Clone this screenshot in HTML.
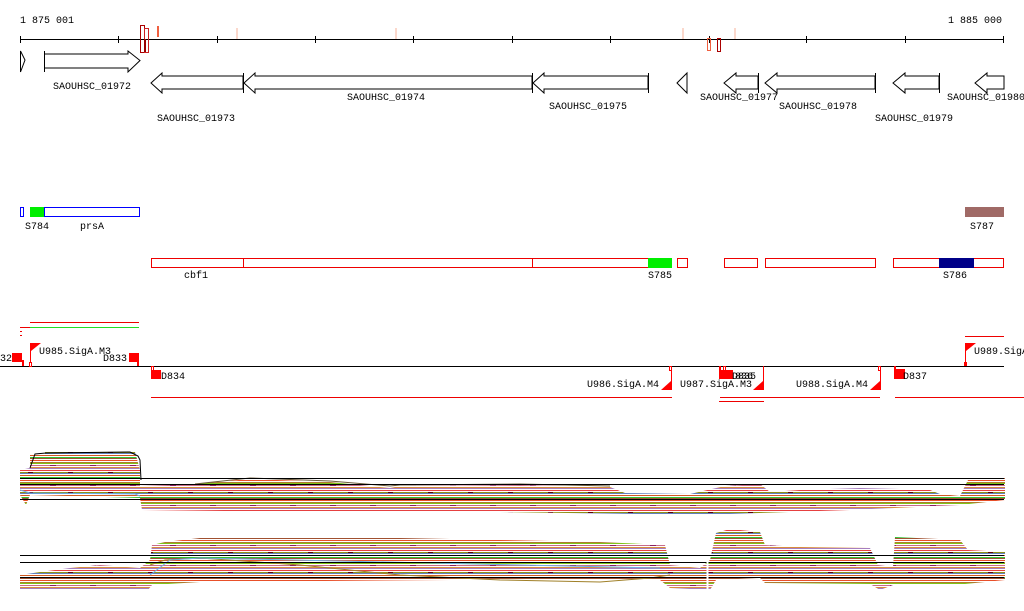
<!DOCTYPE html>
<html><head><meta charset="utf-8"><style>
html,body{margin:0;padding:0;background:#fff;width:1024px;height:611px;overflow:hidden}
svg{display:block}
text{font-family:"Liberation Mono","DejaVu Sans Mono",monospace;font-size:10px;fill:#000}
</style></head><body>
<svg width="1024" height="611" viewBox="0 0 1024 611" xmlns="http://www.w3.org/2000/svg">
<defs>
<pattern id="st" width="40" height="20" patternUnits="userSpaceOnUse">
<rect width="40" height="20" fill="#fff"/>
<rect y="0" width="40" height="1" fill="#e8502a"/>
<rect y="2" width="40" height="1" fill="#b07a30"/>
<rect y="3" width="40" height="1" fill="#7fc418"/>
<rect y="5" width="40" height="1" fill="#c86b8a"/>
<rect y="7" width="40" height="1" fill="#d98c3a"/>
<rect y="8" width="40" height="1" fill="#a67ec0"/>
<rect y="10" width="40" height="1" fill="#e64040"/>
<rect y="12" width="40" height="1" fill="#909018"/>
<rect y="13" width="40" height="1" fill="#6080c0"/>
<rect y="15" width="40" height="1" fill="#d05a20"/>
<rect y="17" width="40" height="1" fill="#30c030"/>
<rect y="18" width="40" height="1" fill="#a05030"/>
<rect x="10" y="5" width="6" height="1" fill="#8a2060"/>
<rect x="28" y="12" width="5" height="1" fill="#600"/>
</pattern>
</defs>

<!-- ruler -->
<text x="20" y="23">1 875 001</text>
<text x="1002" y="23" text-anchor="end">1 885 000</text>
<line x1="20" y1="39.5" x2="1004" y2="39.5" stroke="#000"/>
<g stroke="#000">
<line x1="20.5" y1="36" x2="20.5" y2="43"/><line x1="118.5" y1="36" x2="118.5" y2="43"/><line x1="217.5" y1="36" x2="217.5" y2="43"/><line x1="315.5" y1="36" x2="315.5" y2="43"/><line x1="413.5" y1="36" x2="413.5" y2="43"/><line x1="512.5" y1="36" x2="512.5" y2="43"/><line x1="610.5" y1="36" x2="610.5" y2="43"/><line x1="709.5" y1="36" x2="709.5" y2="43"/><line x1="806.5" y1="36" x2="806.5" y2="43"/><line x1="905.5" y1="36" x2="905.5" y2="43"/><line x1="1003.5" y1="36" x2="1003.5" y2="43"/>
</g>
<rect x="140.5" y="25.5" width="4" height="27" fill="none" stroke="#a00"/>
<rect x="144.5" y="28.5" width="4" height="24" fill="none" stroke="#c22"/>
<line x1="145" y1="39" x2="145" y2="52" stroke="#900" stroke-width="2"/>
<rect x="157" y="26" width="2" height="11" fill="#f06040"/>
<rect x="236" y="28" width="2" height="11" fill="#fbd8cc"/>
<rect x="395" y="28" width="2" height="11" fill="#fbd8cc"/>
<rect x="682" y="28" width="2" height="11" fill="#fbd8cc"/>
<rect x="734" y="28" width="2" height="11" fill="#fbd8cc"/>
<rect x="707.5" y="38.5" width="3" height="12" fill="none" stroke="#f06040"/>
<rect x="717.5" y="38.5" width="3" height="13" fill="none" stroke="#a00"/>

<!-- genes -->
<g fill="none" stroke="#000">
<polygon points="20.5,51 25,60 20.5,72"/>
<line x1="44.5" y1="51" x2="44.5" y2="72"/>
<polygon points="44.5,54 128,54 128,51 140,60.5 128,72 128,68 44.5,68"/>
<polygon points="151,83 162,73 162,76 243,76 243,89 162,89 162,93"/>
<line x1="243.5" y1="73" x2="243.5" y2="93"/>
<polygon points="244,83 255,73 255,76 532,76 532,89 255,89 255,93"/>
<line x1="532.5" y1="73" x2="532.5" y2="93"/>
<polygon points="533,83 544,73 544,76 648,76 648,89 544,89 544,93"/>
<line x1="648.5" y1="73" x2="648.5" y2="93"/>
<polygon points="677,83 687,73 687,93"/>
<polygon points="724,83 736,73 736,76 758,76 758,89 736,89 736,93"/>
<line x1="758.5" y1="73" x2="758.5" y2="93"/>
<polygon points="765,83 777,73 777,76 875,76 875,89 777,89 777,93"/>
<line x1="875.5" y1="73" x2="875.5" y2="93"/>
<polygon points="893,83 905,73 905,76 939,76 939,89 905,89 905,93"/>
<line x1="939.5" y1="73" x2="939.5" y2="93"/>
<polygon points="975,83 987,73 987,76 1004,76 1004,89 987,89 987,93"/>
</g>
<text x="53" y="89">SAOUHSC_01972</text>
<text x="157" y="121">SAOUHSC_01973</text>
<text x="347" y="100">SAOUHSC_01974</text>
<text x="549" y="109">SAOUHSC_01975</text>
<text x="700" y="100">SAOUHSC_01977</text>
<text x="779" y="109">SAOUHSC_01978</text>
<text x="875" y="121">SAOUHSC_01979</text>
<text x="947" y="100">SAOUHSC_01980</text>

<!-- blue row -->
<rect x="20.5" y="207.5" width="3" height="9" fill="none" stroke="#00f"/>
<rect x="30" y="207" width="14" height="10" fill="#0e0"/>
<rect x="44.5" y="207.5" width="95" height="9" fill="none" stroke="#00f"/>
<text x="25" y="229">S784</text>
<text x="80" y="229">prsA</text>
<rect x="965" y="207" width="39" height="10" fill="#a06a66"/>
<text x="970" y="229">S787</text>

<!-- red row -->
<g fill="none" stroke="#e00">
<rect x="151.5" y="258.5" width="92" height="9"/>
<rect x="243.5" y="258.5" width="289" height="9"/>
<rect x="532.5" y="258.5" width="139" height="9"/>
<rect x="677.5" y="258.5" width="10" height="9"/>
<rect x="724.5" y="258.5" width="33" height="9"/>
<rect x="765.5" y="258.5" width="110" height="9"/>
<rect x="893.5" y="258.5" width="110" height="9"/>
</g>
<rect x="648" y="258" width="24" height="10" fill="#0e0"/>
<rect x="939" y="258" width="35" height="10" fill="#008"/>
<text x="184" y="278">cbf1</text>
<text x="648" y="278">S785</text>
<text x="943" y="278">S786</text>

<!-- TSS section -->
<line x1="30" y1="322.5" x2="139" y2="322.5" stroke="#e00"/>
<line x1="30" y1="327.5" x2="139" y2="327.5" stroke="#2d2"/>
<line x1="20" y1="327.5" x2="30" y2="327.5" stroke="#e00"/>
<rect x="20" y="331" width="2" height="1" fill="#e00"/><rect x="20" y="335" width="2" height="1" fill="#e00"/>
<line x1="0" y1="366.5" x2="1004" y2="366.5" stroke="#000"/>
<text x="0" y="361">32</text>
<rect x="12" y="353" width="10" height="9" fill="#f00"/>
<rect x="22" y="360" width="2" height="6" fill="#f00"/>
<line x1="30.5" y1="343" x2="30.5" y2="366" stroke="#f00"/>
<polygon points="31,343 41,343 31,351" fill="#f00"/>
<rect x="29.5" y="362.5" width="2" height="4" fill="#fff" stroke="#f00"/>
<text x="39" y="354">U985.SigA.M3</text>
<text x="103" y="361">D833</text>
<rect x="129" y="353" width="10" height="9" fill="#f00"/>
<rect x="137" y="360" width="2" height="6" fill="#f00"/>
<rect x="151.5" y="366.5" width="2" height="4" fill="none" stroke="#f00"/>
<rect x="151" y="370" width="10" height="9" fill="#f00"/>
<text x="161" y="379">D834</text>
<line x1="151" y1="397.5" x2="672" y2="397.5" stroke="#e00"/>

<rect x="669.5" y="366.5" width="2" height="4" fill="none" stroke="#f00"/>
<line x1="671.5" y1="366" x2="671.5" y2="390" stroke="#f00"/>
<polygon points="671,381 671,390 661,390" fill="#f00"/>
<text x="587" y="387">U986.SigA.M4</text>
<text x="680" y="387">U987.SigA.M3</text>
<rect x="719" y="366" width="2" height="6" fill="#f00"/>
<rect x="723.5" y="366.5" width="2" height="4" fill="none" stroke="#f00"/>
<rect x="719" y="370" width="14" height="9" fill="#f00"/>
<text x="732" y="379">D835</text><text x="735" y="379">836</text>
<line x1="763.5" y1="366" x2="763.5" y2="390" stroke="#f00"/>
<polygon points="763,381 763,390 753,390" fill="#f00"/>
<line x1="720" y1="397.5" x2="880" y2="397.5" stroke="#e00"/>
<line x1="719" y1="401.5" x2="764" y2="401.5" stroke="#e00"/>
<text x="796" y="387">U988.SigA.M4</text>
<rect x="878.5" y="366.5" width="2" height="4" fill="none" stroke="#f00"/>
<line x1="880.5" y1="366" x2="880.5" y2="390" stroke="#f00"/>
<polygon points="880,381 880,390 870,390" fill="#f00"/>
<rect x="894" y="366" width="2" height="4" fill="#f00"/>
<rect x="894" y="369" width="11" height="10" fill="#f00"/>
<text x="903" y="379">D837</text>
<line x1="895" y1="397.5" x2="1024" y2="397.5" stroke="#e00"/>
<line x1="965" y1="336.5" x2="1004" y2="336.5" stroke="#e00"/>
<line x1="965.5" y1="343" x2="965.5" y2="366" stroke="#f00"/>
<polygon points="966,343 976,343 966,351" fill="#f00"/>
<rect x="964" y="362" width="3" height="4" fill="#f00"/>
<text x="974" y="354">U989.SigA</text>

<!-- plot 1 -->
<polygon fill="url(#st)" points="20,470 30,468 30,455 45,454 45,451 135,452 140,470 140,486 195,484 250,479 330,482 390,488 400,486 520,485 610,487 625,493 690,494 725,486 760,484 770,492 800,490 860,488 900,489 930,490 940,494 960,496 968,480 1005,478 1005,500 960,505 850,510 700,515 500,512 300,512 142,510 140,498 30,495 26,505 20,495"/>
<polyline fill="none" stroke="#000" points="30,468 35,454 46,453 130,452 138,456 140,460 141,480"/>
<polyline fill="none" stroke="#6ab0e8" points="20,490 30,493 135,494 140,496"/>
<polyline fill="none" stroke="#6b5a3a" points="195,484 250,478 330,481 390,486 400,485 520,484 610,486"/>
<line x1="20" y1="478.5" x2="1004" y2="478.5" stroke="#000"/>
<line x1="20" y1="484.5" x2="1004" y2="484.5" stroke="#000"/>
<line x1="20" y1="499.5" x2="1004" y2="499.5" stroke="#000"/>

<!-- plot 2 -->
<polygon fill="url(#st)" points="20,575 40,572 70,568 100,565 140,568 150,560 152,545 165,542 200,538 300,538 400,538 500,540 600,542 665,545 670,565 700,568 710,560 716,533 730,529 760,532 765,545 800,547 870,548 878,565 893,567 895,537 960,540 968,550 1005,552 1005,580 965,584 893,585 880,590 870,584 765,583 760,578 716,580 710,590 670,588 660,580 450,580 200,582 152,585 148,590 20,590"/>
<polyline fill="none" stroke="#a08028" points="150,565 165,560 200,558 300,565 400,575 500,580 600,582 650,578 670,575"/>
<polyline fill="none" stroke="#6ab0e8" points="150,575 170,560 200,558 660,568"/>
<line x1="20" y1="555.5" x2="1004" y2="555.5" stroke="#000"/>
<line x1="20" y1="562.5" x2="1004" y2="562.5" stroke="#000"/>
<line x1="20" y1="577.5" x2="1004" y2="577.5" stroke="#000"/>
<line x1="707.5" y1="560" x2="707.5" y2="590" stroke="#fff" stroke-width="2"/>
</svg>
</body></html>
